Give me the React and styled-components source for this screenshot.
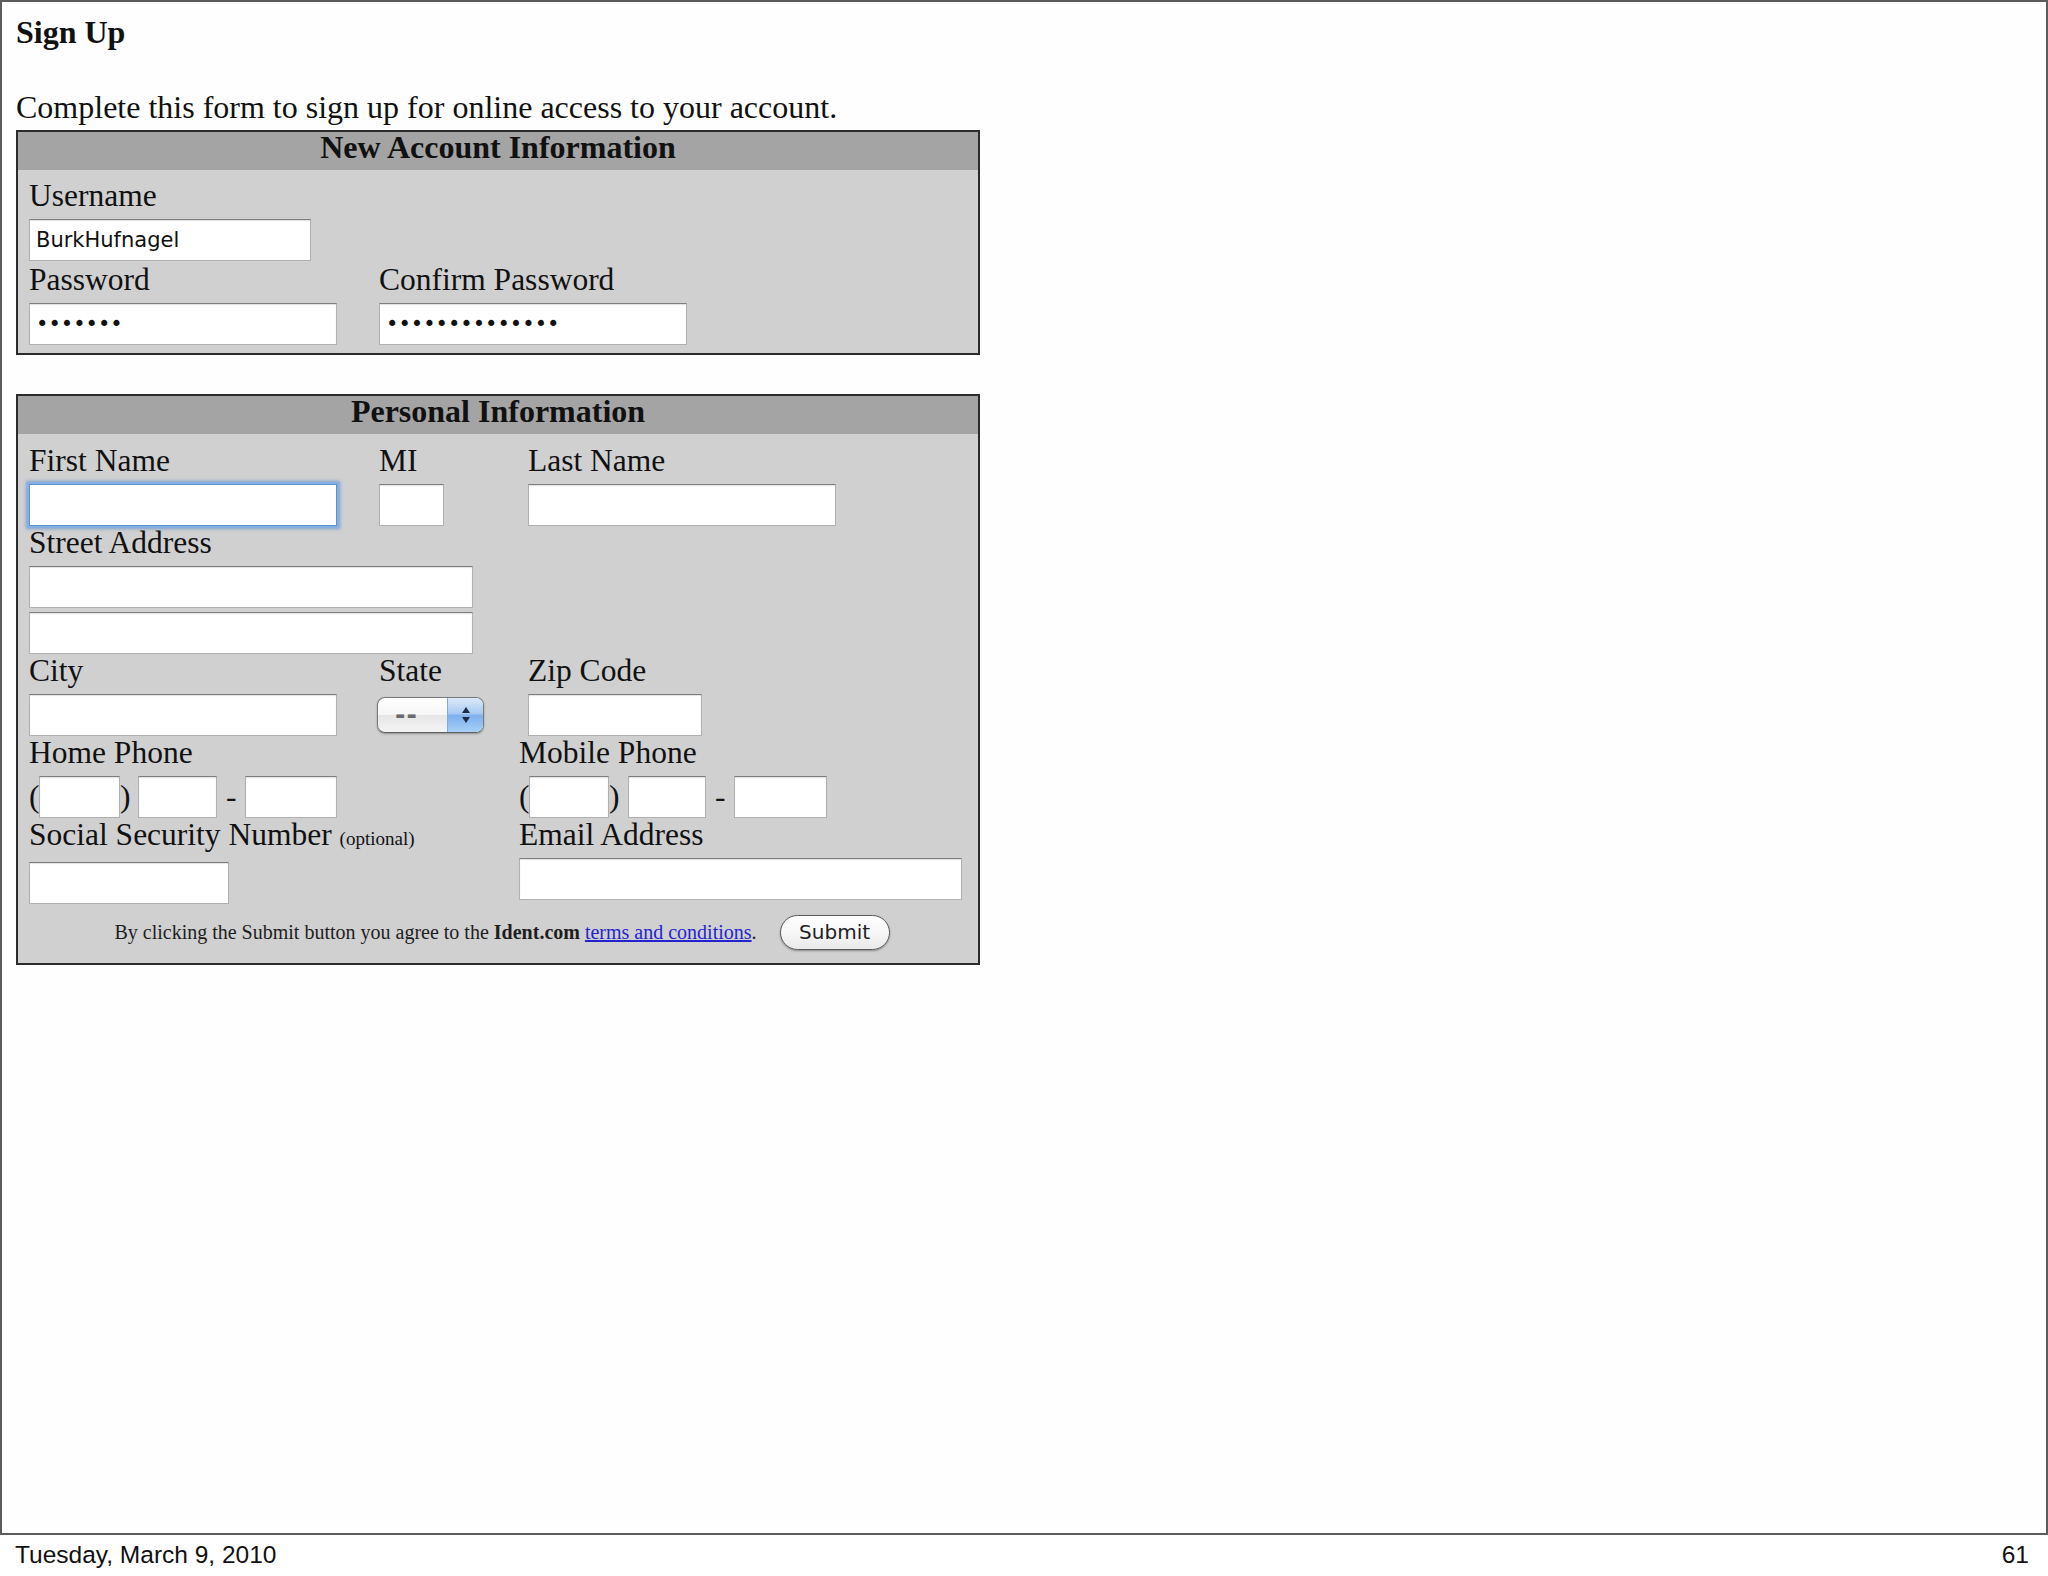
import styled, { createGlobalStyle } from "styled-components";

const GlobalStyle = createGlobalStyle`
  html, body {
    margin: 0;
    padding: 0;
    background: #ffffff;
  }
  body {
    font-family: "Liberation Serif", "Times New Roman", serif;
    color: #111;
  }
`;

export default function App() {
  return (
    <>
      <GlobalStyle />
      <Slide>
        <Frame>
          <Title>Sign Up</Title>
          <Intro>Complete this form to sign up for online access to your account.</Intro>

          <FormBox $mb={39}>
            <BoxHeader>New Account Information</BoxHeader>
            <BoxBody $pad="10px 11px 8px" $gap={3}>
              <Row>
                <Cell>
                  <Label>Username</Label>
                  <TextInput $w={282} defaultValue="BurkHufnagel" />
                </Cell>
              </Row>
              <Row>
                <Cell $w={350}>
                  <Label>Password</Label>
                  <TextInput type="password" $w={308} defaultValue="1234567" />
                </Cell>
                <Cell>
                  <Label>Confirm Password</Label>
                  <TextInput type="password" $w={308} defaultValue="12345678901234" />
                </Cell>
              </Row>
            </BoxBody>
          </FormBox>

          <FormBox>
            <BoxHeader>Personal Information</BoxHeader>
            <BoxBody $pad="11px 11px 13px" $gap={1}>
              <Row>
                <Cell $w={350}>
                  <Label>First Name</Label>
                  <TextInput $w={308} $focused />
                </Cell>
                <Cell $w={149}>
                  <Label>MI</Label>
                  <TextInput $w={65} />
                </Cell>
                <Cell>
                  <Label>Last Name</Label>
                  <TextInput $w={308} />
                </Cell>
              </Row>
              <Row>
                <Cell>
                  <Label>Street Address</Label>
                  <InputStack>
                    <TextInput $w={444} />
                    <TextInput $w={444} />
                  </InputStack>
                </Cell>
              </Row>
              <Row>
                <Cell $w={350}>
                  <Label>City</Label>
                  <TextInput $w={308} />
                </Cell>
                <Cell $w={149}>
                  <Label>State</Label>
                  <StateSelect>
                    <SelectValue>--</SelectValue>
                    <SelectArrows>
                      <svg width="10" height="18" viewBox="0 0 10 18">
                        <path d="M5 1 L9 7 L1 7 Z" fill="#1c2b4a" />
                        <path d="M5 17 L9 11 L1 11 Z" fill="#1c2b4a" />
                      </svg>
                    </SelectArrows>
                  </StateSelect>
                </Cell>
                <Cell>
                  <Label>Zip Code</Label>
                  <TextInput $w={174} />
                </Cell>
              </Row>
              <Row>
                <Cell $w={490}>
                  <Label>Home Phone</Label>
                  <PhoneGroup>
                    <Paren>(</Paren>
                    <TextInput $w={81} />
                    <Paren $after={8}>)</Paren>
                    <TextInput $w={79} />
                    <Dash>-</Dash>
                    <TextInput $w={92} />
                  </PhoneGroup>
                </Cell>
                <Cell>
                  <Label>Mobile Phone</Label>
                  <PhoneGroup>
                    <Paren>(</Paren>
                    <TextInput $w={80} />
                    <Paren $after={9}>)</Paren>
                    <TextInput $w={78} />
                    <Dash>-</Dash>
                    <TextInput $w={93} />
                  </PhoneGroup>
                </Cell>
              </Row>
              <Row>
                <Cell $w={490}>
                  <Label>
                    Social Security Number <Small>(optional)</Small>
                  </Label>
                  <TextInput $w={200} />
                </Cell>
                <Cell>
                  <Label>Email Address</Label>
                  <TextInput $w={443} />
                </Cell>
              </Row>
              <FooterRow>
                <Agreement>
                  By clicking the Submit button you agree to the <b>Ident.com</b>{" "}
                  <TermsLink href="#terms">terms and conditions</TermsLink>.
                </Agreement>
                <SubmitButton type="button">Submit</SubmitButton>
              </FooterRow>
            </BoxBody>
          </FormBox>
        </Frame>
        <SlideFooter>
          <span>Tuesday, March 9, 2010</span>
          <span>61</span>
        </SlideFooter>
      </Slide>
    </>
  );
}

const Slide = styled.div`
  width: 2048px;
  height: 1576px;
  display: flex;
  flex-direction: column;
  background: #ffffff;
`;

const Frame = styled.div`
  height: 1535px;
  box-sizing: border-box;
  border: 2px solid #5c5c5c;
  padding: 0 14px;
  background: #fefefe;
`;

const Title = styled.h1`
  margin: 14px 0 0;
  font-size: 32px;
  line-height: 32px;
  font-weight: 700;
`;

const Intro = styled.p`
  margin: 43px 0 7px;
  font-size: 32px;
  line-height: 32px;
`;

const FormBox = styled.section`
  width: 964px;
  box-sizing: border-box;
  border: 2px solid #2b2b2b;
  background: #d0d0d1;
  margin-bottom: ${(p) => p.$mb || 0}px;
`;

const BoxHeader = styled.div`
  background: #a4a4a5;
  text-align: center;
  font-size: 32px;
  font-weight: 700;
  line-height: 30px;
  padding-bottom: 8px;
`;

const BoxBody = styled.div`
  display: flex;
  flex-direction: column;
  gap: ${(p) => p.$gap}px;
  padding: ${(p) => p.$pad};
`;

const Row = styled.div`
  display: flex;
  align-items: flex-start;
`;

const Cell = styled.div`
  display: flex;
  flex-direction: column;
  align-items: flex-start;
  ${(p) => (p.$w ? `width: ${p.$w}px; flex: none;` : "flex: 1;")}
`;

const Label = styled.div`
  font-size: 31.5px;
  line-height: 32px;
  margin-bottom: 7px;
  white-space: nowrap;
`;

const Small = styled.span`
  font-size: 19px;
`;

const TextInput = styled.input`
  width: ${(p) => p.$w}px;
  height: 42px;
  box-sizing: border-box;
  margin: 0;
  padding: 0 6px;
  background: #ffffff;
  border: 1px solid #b0b0b0;
  border-top-color: #7e7e7e;
  box-shadow: inset 0 1px 1px rgba(0, 0, 0, 0.12);
  font-family: "DejaVu Sans", "Liberation Sans", sans-serif;
  font-size: 21px;
  color: #111;
  outline: none;
  ${(p) =>
    p.$focused &&
    `
    border-color: #5d92cc;
    box-shadow: 0 0 0 2px #84afe0, 0 0 3px 3px rgba(95, 145, 205, 0.75);
  `}
`;

const InputStack = styled.div`
  display: flex;
  flex-direction: column;
  gap: 4px;
`;

const PhoneGroup = styled.div`
  display: flex;
  align-items: center;
  height: 42px;
`;

const Paren = styled.span`
  font-size: 31.5px;
  line-height: 42px;
  width: 10px;
  margin-right: ${(p) => p.$after || 0}px;
`;

const Dash = styled.span`
  font-size: 31.5px;
  line-height: 42px;
  width: 10px;
  text-align: center;
  margin: 0 9px;
`;

const StateSelect = styled.div`
  width: 107px;
  height: 36px;
  box-sizing: border-box;
  margin: 3px 0 3px -2px;
  display: flex;
  border: 1px solid #7a7a7a;
  border-bottom-color: #5e5e5e;
  border-radius: 8px;
  overflow: hidden;
  background: linear-gradient(#ffffff 0%, #f6f6f6 50%, #e6e6e6 51%, #f4f4f4 100%);
  box-shadow: 0 1px 2px rgba(0, 0, 0, 0.3);
`;

const SelectValue = styled.span`
  flex: 1;
  padding-left: 17px;
  font-family: "DejaVu Sans", "Liberation Sans", sans-serif;
  font-size: 25px;
  font-weight: 700;
  letter-spacing: 1px;
  line-height: 34px;
  color: #6a6a6a;
`;

const SelectArrows = styled.span`
  width: 35px;
  display: flex;
  align-items: center;
  justify-content: center;
  border-left: 1px solid #8aa8cc;
  background: linear-gradient(#dbe9fa 0%, #a9cbf2 45%, #7fb0ec 52%, #a6d0f8 100%);
`;

const FooterRow = styled.div`
  margin-top: 9px;
  padding-left: 8px;
  display: flex;
  justify-content: center;
  align-items: center;
  gap: 23px;
  height: 36px;
`;

const Agreement = styled.span`
  font-size: 20px;
  color: #1e1e1e;
  white-space: nowrap;
`;

const TermsLink = styled.a`
  color: #2424cf;
  text-decoration: underline;
`;

const SubmitButton = styled.button`
  width: 110px;
  height: 35px;
  margin: 0;
  padding: 0;
  border: 1px solid #5a5a5a;
  border-radius: 18px;
  background: linear-gradient(#ffffff 0%, #f7f7f7 50%, #e9e9e9 100%);
  box-shadow: 0 1px 2px rgba(0, 0, 0, 0.35);
  font-family: "DejaVu Sans", "Liberation Sans", sans-serif;
  font-size: 20px;
  color: #222;
  cursor: pointer;
`;

const SlideFooter = styled.div`
  display: flex;
  justify-content: space-between;
  padding: 6px 19px 0 15px;
  font-family: "Liberation Sans", Arial, sans-serif;
  font-size: 24.5px;
  color: #111;
`;
